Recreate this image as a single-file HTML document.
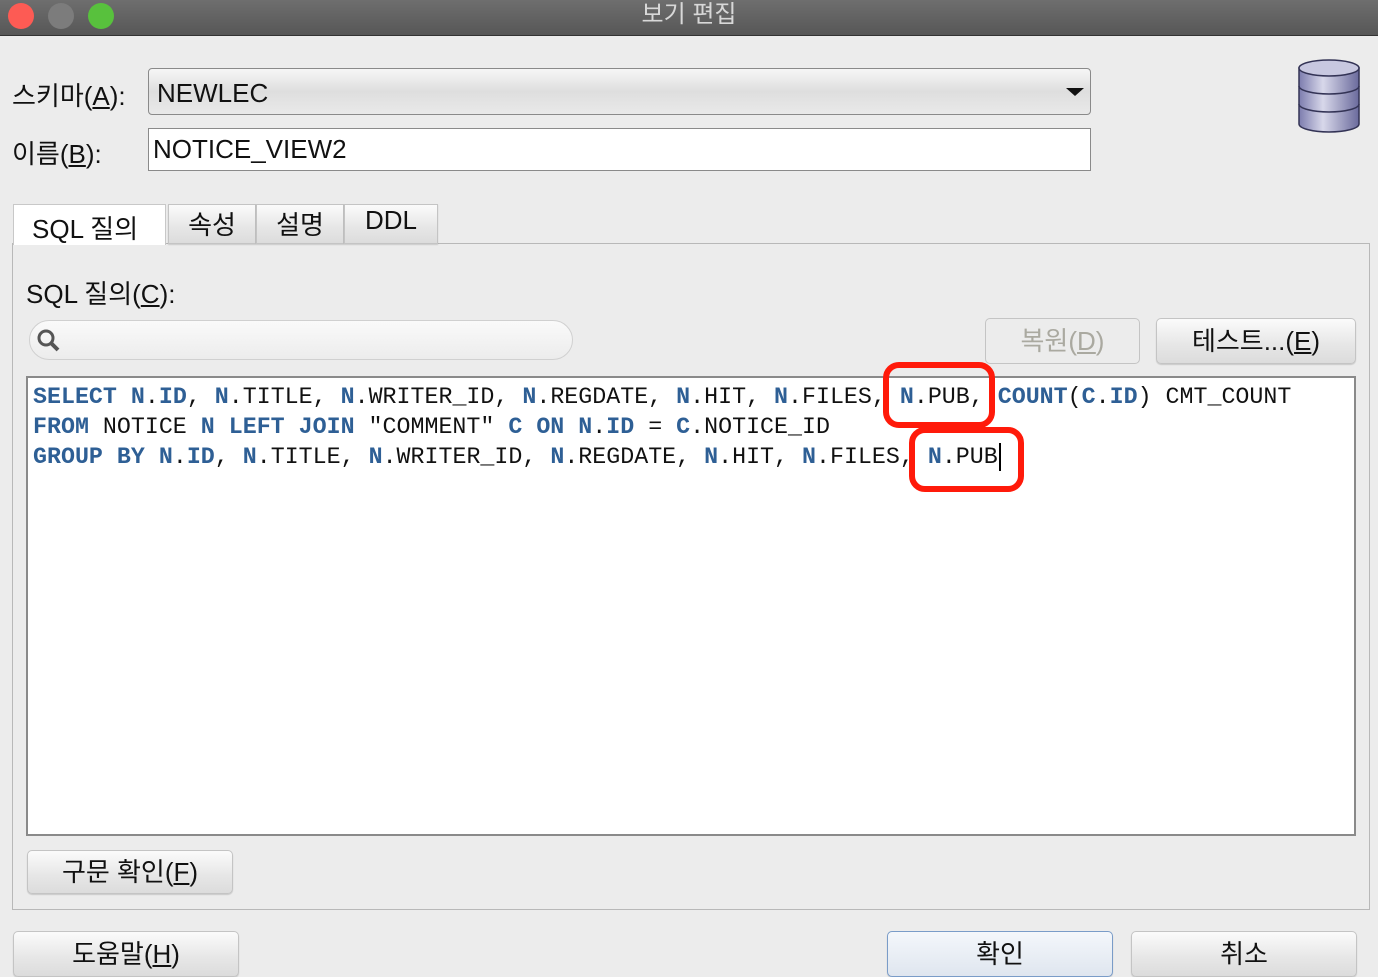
<!DOCTYPE html>
<html><head><meta charset="utf-8"><style>
*{margin:0;padding:0;box-sizing:border-box}
body{width:1378px;height:976px;background:#ececec;position:relative;overflow:hidden;font-family:"Liberation Sans","Noto Sans CJK KR",sans-serif;color:#111}
.a{position:absolute}
.lbl{font-size:26px;white-space:nowrap}
.btn{position:absolute;border:1px solid #c4c4c4;border-radius:5px;background:linear-gradient(#fbfbfb,#e6e6e6 60%,#dcdcdc);font-size:26px;text-align:center;box-shadow:0 1px 1px rgba(0,0,0,.15)}
.code{position:absolute;left:33px;top:382px;font-family:"Liberation Mono",monospace;font-size:23.3px;line-height:30px;white-space:pre;color:#111}
.k{color:#2e5f95;font-weight:bold}
.r{position:absolute;border:6px solid #ff1a0a;border-radius:16px}
</style></head><body>
<div class="a" style="left:0;top:0;width:1378px;height:36px;background:linear-gradient(#6e6e6e,#575757);border-bottom:1px solid #333"></div>
<div class="a" style="left:8px;top:3px;width:26px;height:26px;border-radius:50%;background:#fd5b54"></div>
<div class="a" style="left:48px;top:3px;width:26px;height:26px;border-radius:50%;background:#7c7c7c"></div>
<div class="a" style="left:88px;top:3px;width:26px;height:26px;border-radius:50%;background:#58c13d"></div>
<div class="a lbl" style="left:0;width:1378px;top:0;text-align:center;color:#d8d8d8;font-size:24px;line-height:30px">보기 편집</div>

<div class="a lbl" style="left:12px;top:76px">스키마(<u>A</u>):</div>
<div class="a" style="left:148px;top:68px;width:943px;height:47px;border:1px solid #8a8a8a;border-radius:4px;background:linear-gradient(#f6f6f6,#dedede 50%,#e9e9e9)"></div>
<div class="a lbl" style="left:157px;top:78px">NEWLEC</div>
<div class="a" style="left:1066px;top:88px;width:0;height:0;border-left:9px solid transparent;border-right:9px solid transparent;border-top:8px solid #111"></div>

<div class="a lbl" style="left:12px;top:134px">이름(<u>B</u>):</div>
<div class="a" style="left:148px;top:128px;width:943px;height:43px;border:1px solid #8a8a8a;background:#fff"></div>
<div class="a lbl" style="left:153px;top:134px">NOTICE_VIEW2</div>

<svg class="a" style="left:1294px;top:56px" width="70" height="80" viewBox="0 0 70 80">
<defs><linearGradient id="g" x1="0" x2="1"><stop offset="0" stop-color="#7c7cae"/><stop offset=".4" stop-color="#d8d8ea"/><stop offset="1" stop-color="#6a6a9c"/></linearGradient></defs>
<path d="M5 12 V68 A30 8 0 0 0 65 68 V12 Z" fill="url(#g)" stroke="#333355" stroke-width="1.5"/>
<ellipse cx="35" cy="12" rx="30" ry="8" fill="#c8c8e0" stroke="#333355" stroke-width="1.5"/>
<path d="M5 30 A30 8 0 0 0 65 30 M5 48 A30 8 0 0 0 65 48" fill="none" stroke="#333355" stroke-width="1.5"/>
</svg>

<div class="a" style="left:12px;top:243px;width:1358px;height:667px;border:1px solid #b8b8b8"></div>
<div class="a" style="left:13px;top:204px;width:153px;height:41px;background:#fff;border:1px solid #c8c8c8;border-bottom:none"></div>
<div class="a lbl" style="left:32px;top:209px">SQL 질의</div>
<div class="btn" style="left:168px;top:204px;width:88px;height:40px;border-radius:0">속성</div>
<div class="btn" style="left:256px;top:204px;width:88px;height:40px;border-radius:0">설명</div>
<div class="btn" style="left:344px;top:204px;width:94px;height:40px;border-radius:0">DDL</div>

<div class="a lbl" style="left:26px;top:274px">SQL 질의(<u>C</u>):</div>
<div class="a" style="left:29px;top:320px;width:544px;height:40px;border:1px solid #d0d0d0;border-radius:20px;background:linear-gradient(#fafafa,#ececec)"></div>
<svg class="a" style="left:36px;top:328px" width="26" height="26"><circle cx="10" cy="10" r="7" fill="none" stroke="#555" stroke-width="3"/><path d="M15 15 L22 22" stroke="#555" stroke-width="4"/></svg>

<div class="btn" style="left:985px;top:318px;width:155px;height:46px;line-height:44px;color:#aaa9a0;background:#ececec;box-shadow:none">복원(<u>D</u>)</div>
<div class="btn" style="left:1156px;top:318px;width:200px;height:46px;line-height:44px">테스트...(<u>E</u>)</div>

<div class="a" style="left:26px;top:376px;width:1330px;height:460px;background:#fff;border:2px solid #8a8a8a"></div>
<div class="code"><span class="k">SELECT</span> <span class="k">N</span>.<span class="k">ID</span>, <span class="k">N</span>.TITLE, <span class="k">N</span>.WRITER_ID, <span class="k">N</span>.REGDATE, <span class="k">N</span>.HIT, <span class="k">N</span>.FILES, <span class="k">N</span>.PUB, <span class="k">COUNT</span>(<span class="k">C</span>.<span class="k">ID</span>) CMT_COUNT
<span class="k">FROM</span> NOTICE <span class="k">N</span> <span class="k">LEFT</span> <span class="k">JOIN</span> "COMMENT" <span class="k">C</span> <span class="k">ON</span> <span class="k">N</span>.<span class="k">ID</span> = <span class="k">C</span>.NOTICE_ID
<span class="k">GROUP</span> <span class="k">BY</span> <span class="k">N</span>.<span class="k">ID</span>, <span class="k">N</span>.TITLE, <span class="k">N</span>.WRITER_ID, <span class="k">N</span>.REGDATE, <span class="k">N</span>.HIT, <span class="k">N</span>.FILES, <span class="k">N</span>.PUB</div>
<div class="a" style="left:999px;top:443px;width:2px;height:28px;background:#000"></div>
<div class="r" style="left:883px;top:362px;width:112px;height:66px"></div>
<div class="r" style="left:909px;top:427px;width:115px;height:65px"></div>

<div class="btn" style="left:27px;top:850px;width:206px;height:44px;line-height:42px">구문 확인(<u>F</u>)</div>
<div class="btn" style="left:13px;top:931px;width:226px;height:46px;line-height:44px">도움말(<u>H</u>)</div>
<div class="btn" style="left:887px;top:931px;width:226px;height:46px;line-height:44px;border-color:#7a9cc8;background:linear-gradient(#f4f7fb,#dfe6ef)">확인</div>
<div class="btn" style="left:1131px;top:931px;width:226px;height:46px;line-height:44px">취소</div>
</body></html>
